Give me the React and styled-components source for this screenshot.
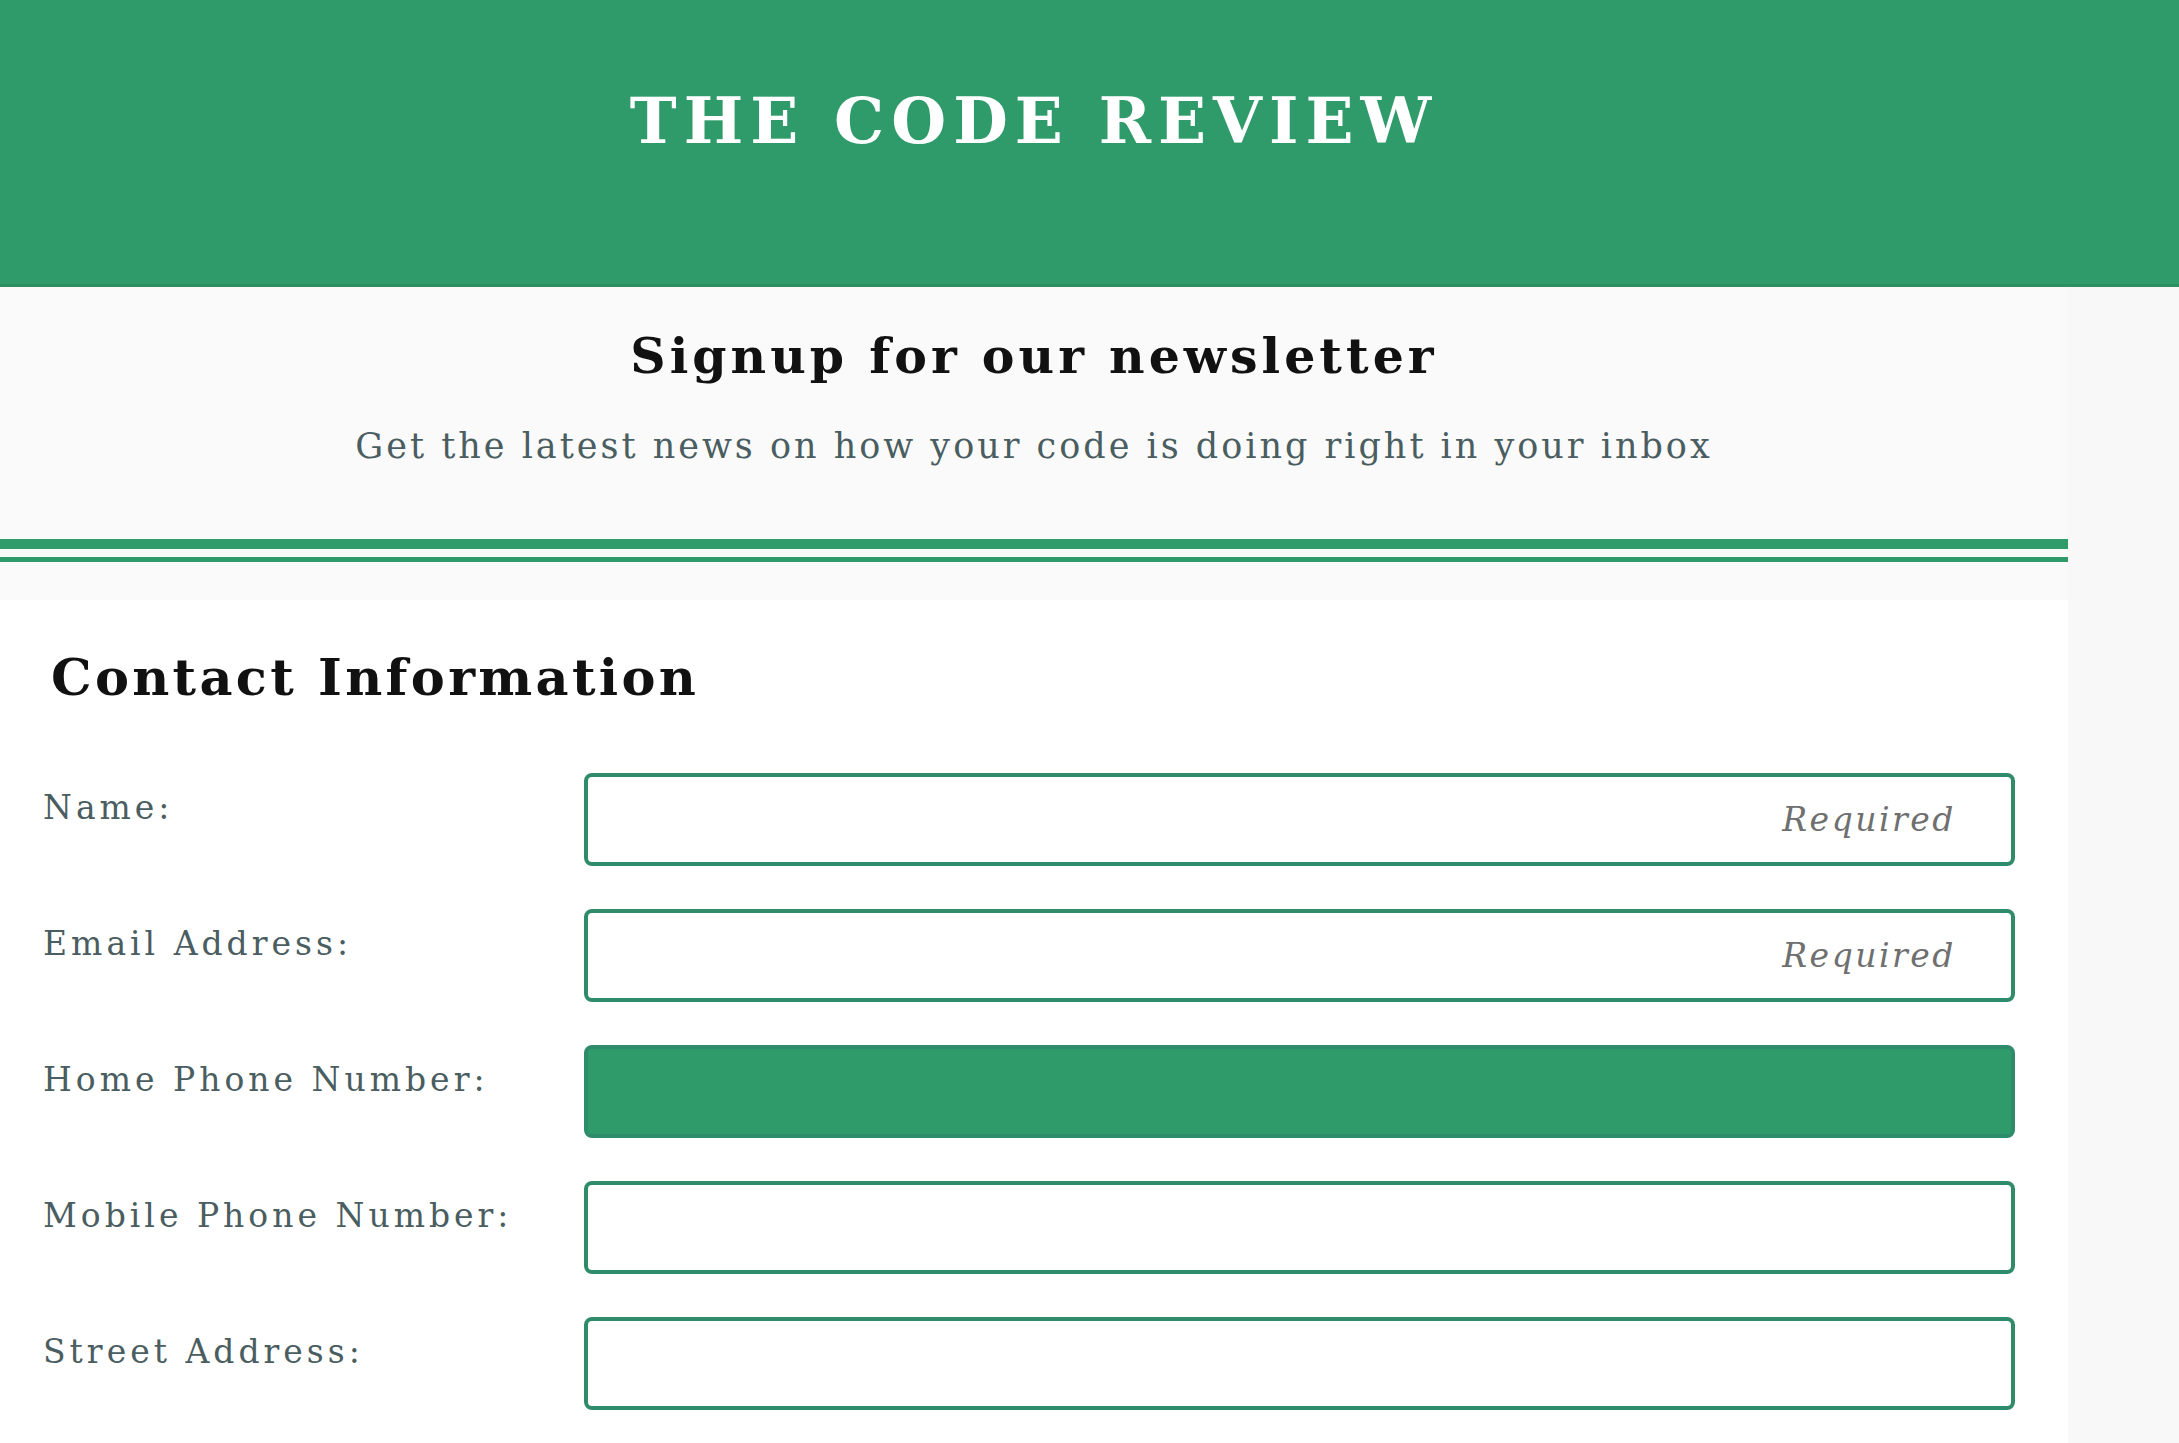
import React from 'react';
import styled, { createGlobalStyle } from 'styled-components';

const GlobalStyle = createGlobalStyle`
  html, body {
    margin: 0;
    padding: 0;
    background: #f8f8f8;
    font-family: "DejaVu Serif", "Liberation Serif", serif;
  }
  * {
    box-sizing: border-box;
  }
`;

const GREEN = '#309b6a';
const BORDER = '#2f8c6b';
const MUTED = '#4a5d60';

const Header = styled.header`
  background: ${GREEN};
  height: 287px;
  border-bottom: 3px solid #2d8e62;
`;

const HeaderInner = styled.div`
  width: 2068px;
  padding-top: 85px;
  text-align: center;
`;

const Title = styled.h1`
  margin: 0;
  color: #ffffff;
  font-size: 63px;
  font-weight: bold;
  line-height: 1.164;
  letter-spacing: 7px;
`;

const Main = styled.main`
  width: 2068px;
`;

const Intro = styled.section`
  background: #fafafa;
  padding-top: 41px;
  text-align: center;
`;

const Heading = styled.h2`
  margin: 0;
  color: #111;
  font-size: 49px;
  font-weight: bold;
  line-height: 1.164;
  letter-spacing: 4px;
`;

const Lead = styled.p`
  margin: 41px 0 0;
  color: ${MUTED};
  font-size: 35px;
  line-height: 1.164;
  letter-spacing: 3px;
`;

const Rule = styled.div`
  margin-top: 72px;
  height: 23px;
  border-top: 10px solid ${GREEN};
  border-bottom: 5px solid ${GREEN};
`;

const Spacer = styled.div`
  height: 38px;
  background: #fafafa;
`;

const FormCard = styled.form`
  background: #ffffff;
  padding: 48px 53px 60px 43px;
`;

const FormTitle = styled.h3`
  margin: 0 0 66px 8px;
  color: #111;
  font-size: 51px;
  font-weight: bold;
  line-height: 1.164;
  letter-spacing: 3.3px;
`;

const Fields = styled.div`
  display: grid;
  grid-template-columns: 541px 1fr;
  row-gap: 43px;
`;

const Label = styled.label`
  padding-top: 16px;
  color: ${MUTED};
  font-size: 33px;
  line-height: 1.164;
  letter-spacing: 4px;
`;

const Input = styled.input`
  display: block;
  width: 100%;
  height: 93px;
  padding: 0 55px 0 20px;
  border: 4px solid ${BORDER};
  border-radius: 8px;
  background: ${p => (p.$filled ? GREEN : '#ffffff')};
  font-family: inherit;
  font-size: 33px;
  text-align: right;
  outline: none;

  &::placeholder {
    color: #6f6f6f;
    font-style: italic;
    letter-spacing: 2.5px;
  }
`;

const fields = [
  { id: 'name', label: 'Name:', required: true },
  { id: 'email', label: 'Email Address:', required: true },
  { id: 'home', label: 'Home Phone Number:', filled: true },
  { id: 'mobile', label: 'Mobile Phone Number:' },
  { id: 'street', label: 'Street Address:' },
];

export default function App() {
  return (
    <>
      <GlobalStyle />
      <Header>
        <HeaderInner>
          <Title>THE CODE REVIEW</Title>
        </HeaderInner>
      </Header>
      <Main>
        <Intro>
          <Heading>Signup for our newsletter</Heading>
          <Lead>Get the latest news on how your code is doing right in your inbox</Lead>
          <Rule />
        </Intro>
        <Spacer />
        <FormCard onSubmit={e => e.preventDefault()}>
          <FormTitle>Contact Information</FormTitle>
          <Fields>
            {fields.map(f => (
              <React.Fragment key={f.id}>
                <Label htmlFor={f.id}>{f.label}</Label>
                <Input
                  id={f.id}
                  $filled={f.filled}
                  placeholder={f.required ? 'Required' : ''}
                />
              </React.Fragment>
            ))}
          </Fields>
        </FormCard>
      </Main>
    </>
  );
}
